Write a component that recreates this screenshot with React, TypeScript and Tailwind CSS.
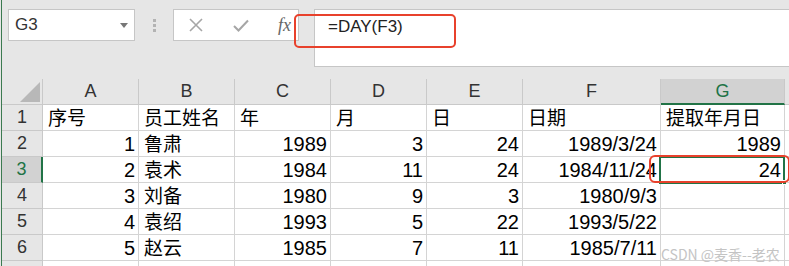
import React from "react";

const cols = ["A", "B", "C", "D", "E", "F", "G"];

type Cell = { v: string; num?: boolean };

const rows: Cell[][] = [
  [{ v: "序号" }, { v: "员工姓名" }, { v: "年" }, { v: "月" }, { v: "日" }, { v: "日期" }, { v: "提取年月日" }],
  [{ v: "1", num: true }, { v: "鲁肃" }, { v: "1989", num: true }, { v: "3", num: true }, { v: "24", num: true }, { v: "1989/3/24", num: true }, { v: "1989", num: true }],
  [{ v: "2", num: true }, { v: "袁术" }, { v: "1984", num: true }, { v: "11", num: true }, { v: "24", num: true }, { v: "1984/11/24", num: true }, { v: "24", num: true }],
  [{ v: "3", num: true }, { v: "刘备" }, { v: "1980", num: true }, { v: "9", num: true }, { v: "3", num: true }, { v: "1980/9/3", num: true }, { v: "" }],
  [{ v: "4", num: true }, { v: "袁绍" }, { v: "1993", num: true }, { v: "5", num: true }, { v: "22", num: true }, { v: "1993/5/22", num: true }, { v: "" }],
  [{ v: "5", num: true }, { v: "赵云" }, { v: "1985", num: true }, { v: "7", num: true }, { v: "11", num: true }, { v: "1985/7/11", num: true }, { v: "" }],
];

const cjk = "font-['Noto_Sans_CJK_SC',sans-serif]";

export default function App() {
  return (
    <div className="relative w-[789px] h-[266px] overflow-hidden bg-[#e6e6e6] font-['Liberation_Sans',sans-serif]">
      <div className="ml-px border-l border-[#3b7a50] h-full flex flex-col">
        {/* formula bar */}
        <div className="h-[79px] shrink-0 flex items-start pt-[9px] pl-[6px]">
          <div className="w-[127px] h-[32px] border border-[#c6c6c6] bg-white flex items-center justify-between pl-[6px] pr-[6px]">
            <span className="text-[17px] text-[#333]">G3</span>
            <span className="w-0 h-0 border-l-[4px] border-r-[4px] border-t-[5px] border-l-transparent border-r-transparent border-t-[#777]" />
          </div>
          <div className="w-[38px] h-[32px] flex flex-col items-center justify-center gap-[2px]">
            <span className="w-[3px] h-[3px] bg-[#b3b3b3]" />
            <span className="w-[3px] h-[3px] bg-[#b3b3b3]" />
            <span className="w-[3px] h-[3px] bg-[#b3b3b3]" />
          </div>
          <div className="w-[126px] h-[32px] border border-[#c6c6c6] bg-white flex items-center">
            <svg width="14" height="14" viewBox="0 0 14 14" className="ml-[15px]">
              <path d="M1 1L13 13M13 1L1 13" stroke="#a6a6a6" strokeWidth="1.6" />
            </svg>
            <svg width="16" height="13" viewBox="0 0 16 13" className="ml-[30px]">
              <path d="M1 7L5.5 11.5L15 1.5" stroke="#a6a6a6" strokeWidth="2" fill="none" />
            </svg>
            <span className="ml-[29px] font-['Liberation_Serif',serif] italic text-[18px] text-[#666] leading-none">fx</span>
          </div>
          <div className="w-[15px]" />
          <div className="flex-1 h-[58px] border-y border-l border-[#c6c6c6] bg-white pl-[13px] pt-[4px]">
            <span className="text-[17px] text-[#222]">=DAY(F3)</span>
          </div>
        </div>

        {/* grid */}
        <div className="relative grid grid-cols-[41px_96px_96px_96px_96px_96px_138px_124px_1fr] auto-rows-[26px] bg-white">
          <div className="bg-[#e6e6e6] border-r border-b border-[#c9c9c9] flex items-end justify-end">
            <span className="w-0 h-0 mr-[2px] mb-[2px]" style={{ borderRight: "20px solid #b8b8b8", borderTop: "20px solid transparent" }} />
          </div>
          {cols.map((c) => (
            <div
              key={c}
              className={
                c === "G"
                  ? "bg-[#d2d2d2] border-r border-b-2 border-r-[#c9c9c9] border-b-[#217346] flex items-center justify-center text-[18px] text-[#217346]"
                  : "bg-[#e6e6e6] border-r border-b border-[#c9c9c9] flex items-center justify-center text-[18px] text-[#333]"
              }
            >
              {c}
            </div>
          ))}
          <div className="bg-[#e6e6e6] border-b border-[#c9c9c9]" />

          {rows.map((r, i) => (
            <React.Fragment key={i}>
              <div
                className={
                  i === 2
                    ? "bg-[#d2d2d2] border-r-2 border-b border-r-[#217346] border-b-[#c9c9c9] flex items-center justify-center text-[18px] text-[#217346]"
                    : "bg-[#e6e6e6] border-r border-b border-[#c9c9c9] flex items-center justify-center text-[18px] text-[#333]"
                }
              >
                {i + 1}
              </div>
              {r.map((cell, j) => (
                <div
                  key={j}
                  className={
                    cell.num
                      ? "border-r border-b border-[#d4d4d4] flex items-center justify-end pr-[3px] text-[20px] text-black"
                      : `border-r border-b border-[#d4d4d4] flex items-center pl-[5px] text-[19px] text-black ${cjk}`
                  }
                >
                  {cell.v}
                </div>
              ))}
              <div className="border-b border-[#d4d4d4]" />
            </React.Fragment>
          ))}
          <div className="bg-[#e6e6e6] border-r border-[#c9c9c9]" />
          {cols.map((c) => (
            <div key={c} className="border-r border-[#d4d4d4]" />
          ))}
          <div />

          {/* active cell G3 */}
          <div className="absolute left-[657px] top-[77px] w-[126px] h-[28px] border-2 border-[#217346]" />
          <div className="absolute left-[780px] top-[101px] w-[5px] h-[5px] bg-[#217346] border border-white" />
        </div>
      </div>

      {/* annotations */}
      <div className="absolute left-[294px] top-[14px] w-[162px] h-[34px] border-2 border-[#e8412c] rounded-[5px]" />
      <div className="absolute left-[649px] top-[155px] w-[141px] h-[28px] border-2 border-[#e8412c] rounded-[6px]" />
      <div className={`absolute left-[661px] top-[244px] text-[14px] text-[#c4c4c4] ${cjk}`}>CSDN @麦香--老农</div>
    </div>
  );
}
